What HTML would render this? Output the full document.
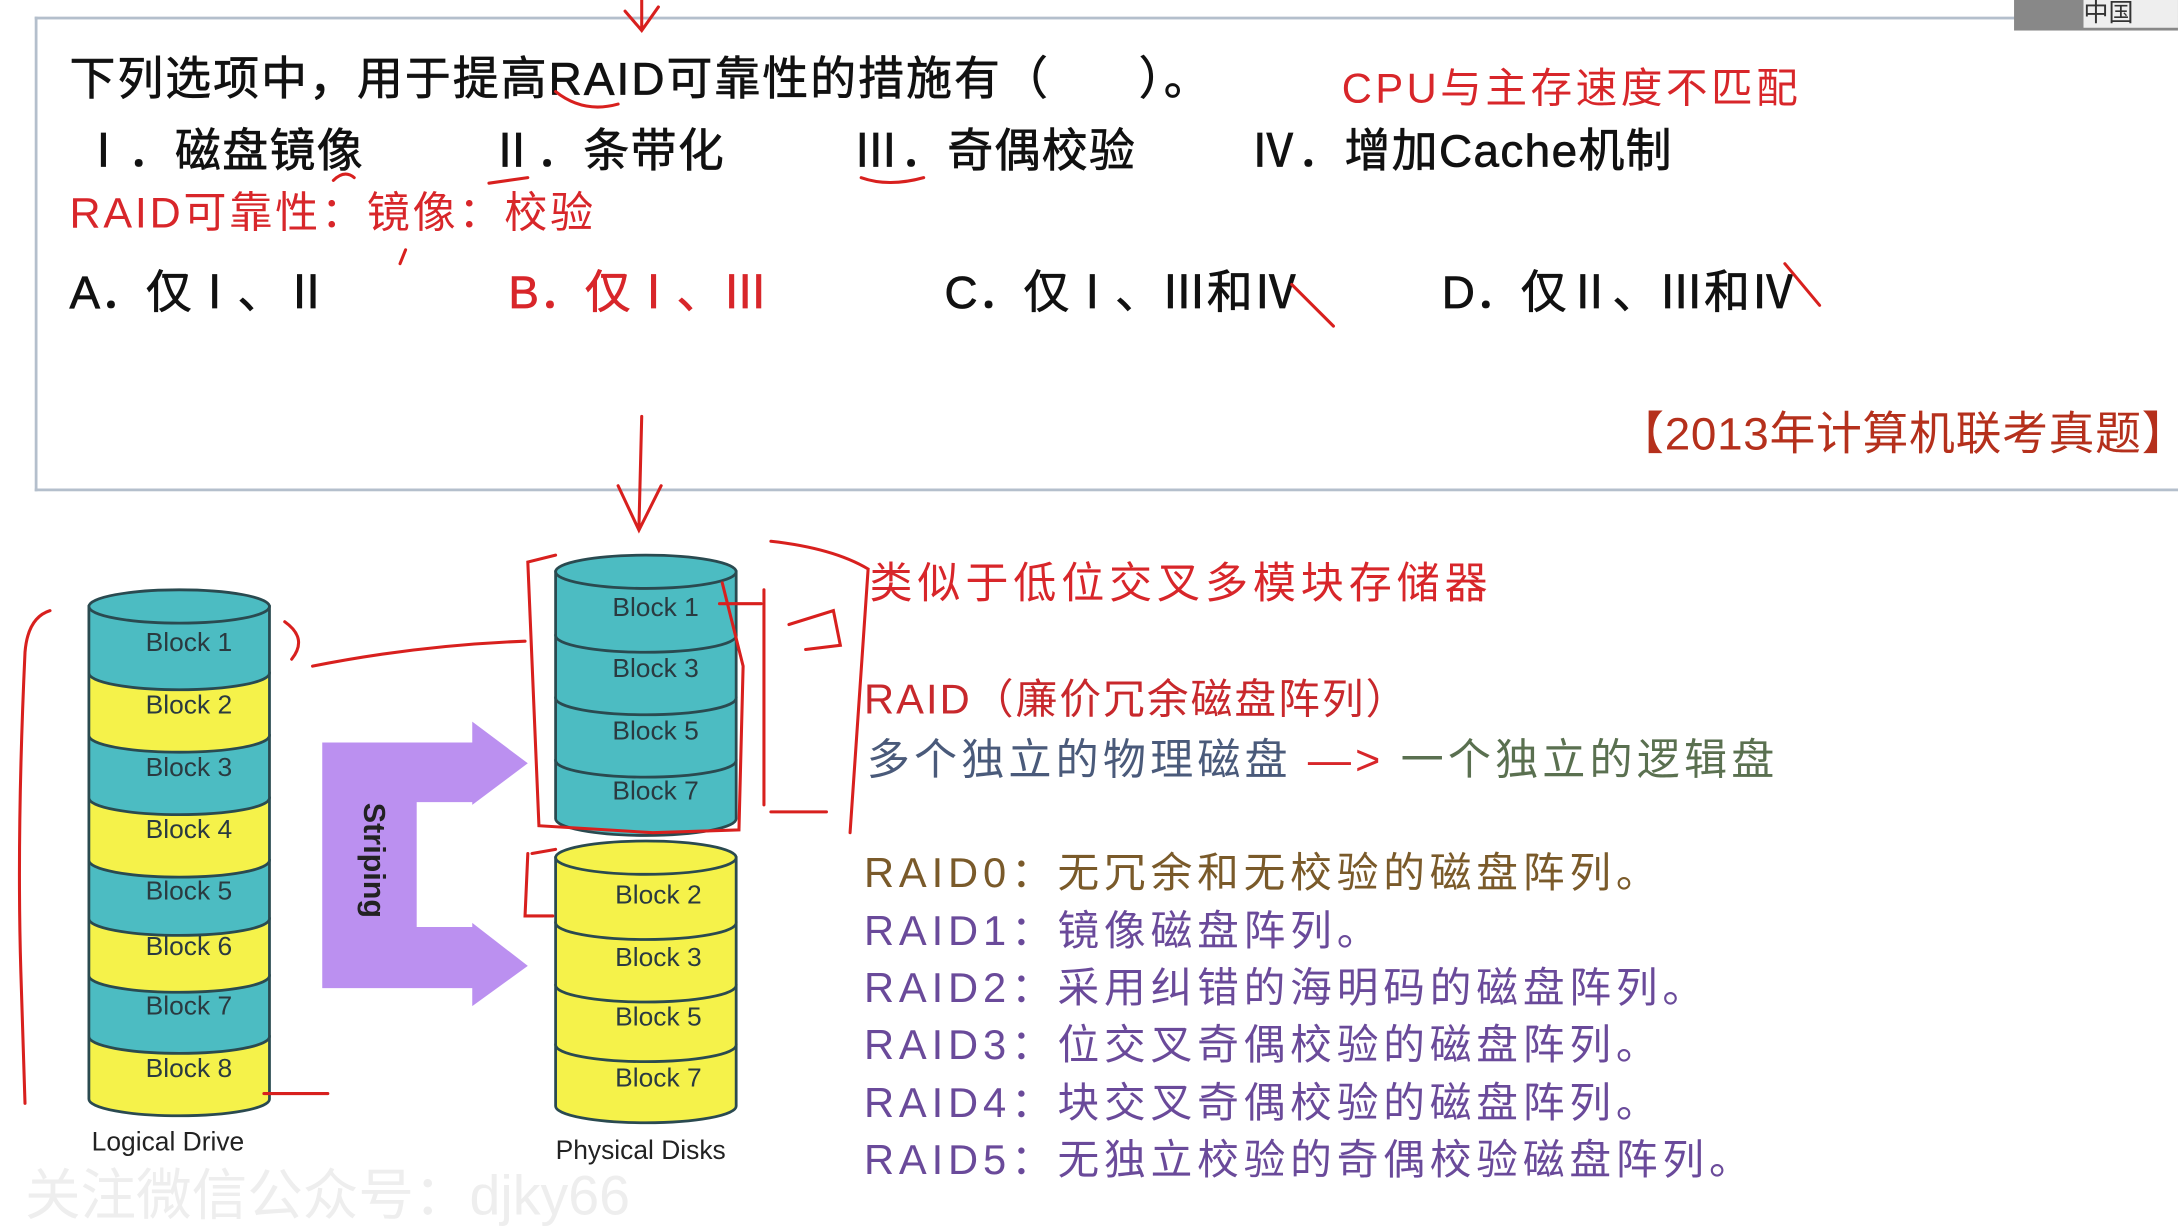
<!DOCTYPE html>
<html><head><meta charset="utf-8"><style>
html,body{margin:0;padding:0;background:#fff;overflow:hidden}
#w{position:absolute;left:0;top:0;width:1568px;height:882px;transform:scale(1.389,1.3878);transform-origin:0 0;font-family:"Liberation Sans","Noto Sans CJK SC",sans-serif}
.t{position:absolute;white-space:nowrap;line-height:1}
.k{color:#111;font-size:33px;-webkit-text-stroke:0.5px #111}
.r{color:#d8262a}
.rm{font-family:"Noto Sans CJK SC",sans-serif}
svg{position:absolute;left:0;top:0}
</style></head><body><div id="w">
<div style="position:absolute;left:25px;top:12px;width:1560px;height:338px;border:2px solid #b4bfcc;border-right:none"></div>
<div style="position:absolute;left:1450px;top:0;width:118px;height:22px;background:#888"></div>
<div style="position:absolute;left:1500px;top:0;width:68px;height:20px;background:#eee;color:#333;font-size:18px;line-height:18px" class="t">中国</div>

<div class="t k" style="left:50px;top:40px;letter-spacing:1.5px">下列选项中，用于提高RAID可靠性的措施有（&nbsp;&nbsp;&nbsp;&nbsp;&nbsp;&nbsp;）。</div>
<div class="t k" style="left:58px;top:90px;letter-spacing:1px"><span class="rm">Ⅰ</span>．磁盘镜像</div>
<div class="t k" style="left:352px;top:90px;letter-spacing:1px"><span class="rm">Ⅱ</span>．条带化</div>
<div class="t k" style="left:614px;top:90px;letter-spacing:1px"><span class="rm">Ⅲ</span>．奇偶校验</div>
<div class="t k" style="left:900px;top:90px;letter-spacing:1px"><span class="rm">Ⅳ</span>．增加Cache机制</div>
<div class="t r" style="left:966px;top:50px;font-size:30px;letter-spacing:2.5px">CPU与主存速度不匹配</div>
<div class="t r" style="left:50px;top:138px;font-size:31px;letter-spacing:2px">RAID可靠性：镜像：校验</div>
<div class="t k" style="left:50px;top:192px">A．仅<span class="rm">Ⅰ、Ⅱ</span></div>
<div class="t k r" style="left:366px;top:192px;color:#d8262a;-webkit-text-stroke:0.5px #d8262a">B．仅<span class="rm">Ⅰ、Ⅲ</span></div>
<div class="t k" style="left:680px;top:192px">C．仅<span class="rm">Ⅰ、Ⅲ</span>和<span class="rm">Ⅳ</span></div>
<div class="t k" style="left:1038px;top:192px">D．仅<span class="rm">Ⅱ、Ⅲ</span>和<span class="rm">Ⅳ</span></div>
<div class="t" style="left:1165px;top:296px;font-size:33px;color:#b5301c;letter-spacing:0.5px">【2013年计算机联考真题】</div>

<div class="t r" style="left:626px;top:405px;font-size:31px;letter-spacing:3.5px">类似于低位交叉多模块存储器</div>
<div class="t" style="left:622px;top:490px;font-size:30px;color:#c8282c;letter-spacing:1.5px">RAID（廉价冗余磁盘阵列）</div>
<div class="t" style="left:624px;top:532px;font-size:31px;color:#4a5a7a;letter-spacing:3px">多个独立的物理磁盘 <span style="color:#d8262a">—&gt;</span> <span style="color:#5a7050">一个独立的逻辑盘</span></div>
<div class="t" style="left:622px;top:615px;font-size:30px;color:#7a5a2a;letter-spacing:3.5px">RAID0：无冗余和无校验的磁盘阵列。</div>
<div class="t" style="left:622px;top:657px;font-size:30px;color:#6a4a9a;letter-spacing:3.5px">RAID1：镜像磁盘阵列。</div>
<div class="t" style="left:622px;top:698px;font-size:30px;color:#6a4a9a;letter-spacing:3.5px">RAID2：采用纠错的海明码的磁盘阵列。</div>
<div class="t" style="left:622px;top:739px;font-size:30px;color:#6a4a9a;letter-spacing:3.5px">RAID3：位交叉奇偶校验的磁盘阵列。</div>
<div class="t" style="left:622px;top:781px;font-size:30px;color:#6a4a9a;letter-spacing:3.5px">RAID4：块交叉奇偶校验的磁盘阵列。</div>
<div class="t" style="left:622px;top:822px;font-size:30px;color:#6a4a9a;letter-spacing:3.5px">RAID5：无独立校验的奇偶校验磁盘阵列。</div>
<div class="t" style="left:66px;top:814px;font-size:19px;color:#222">Logical Drive</div>
<div class="t" style="left:400px;top:820px;font-size:19px;color:#222">Physical Disks</div>
<div class="t" style="left:18px;top:842px;font-size:40px;color:#eee">关注微信公众号：djky66</div>

<svg width="1568" height="882" viewBox="0 0 1568 882">
<g stroke="#2a4a50" stroke-width="2">
<path d="M64,747 L64,792 A65,12 0 0 0 194,792 L194,747Z" fill="#f5f24a"/>
<path d="M64,703 L64,747 A65,12 0 0 0 194,747 L194,703Z" fill="#4cbcc2"/>
<path d="M64,662 L64,703 A65,12 0 0 0 194,703 L194,662Z" fill="#f5f24a"/>
<path d="M64,620 L64,662 A65,12 0 0 0 194,662 L194,620Z" fill="#4cbcc2"/>
<path d="M64,575 L64,620 A65,12 0 0 0 194,620 L194,575Z" fill="#f5f24a"/>
<path d="M64,530 L64,575 A65,12 0 0 0 194,575 L194,530Z" fill="#4cbcc2"/>
<path d="M64,485 L64,530 A65,12 0 0 0 194,530 L194,485Z" fill="#f5f24a"/>
<path d="M64,437 L64,485 A65,12 0 0 0 194,485 L194,437Z" fill="#4cbcc2"/>
<ellipse cx="129" cy="437" rx="65" ry="12" fill="#4cbcc2"/>
<path d="M400,548 L400,590 A65,12 0 0 0 530,590 L530,548Z" fill="#4cbcc2"/>
<path d="M400,503 L400,548 A65,12 0 0 0 530,548 L530,503Z" fill="#4cbcc2"/>
<path d="M400,458 L400,503 A65,12 0 0 0 530,503 L530,458Z" fill="#4cbcc2"/>
<path d="M400,412 L400,458 A65,12 0 0 0 530,458 L530,412Z" fill="#4cbcc2"/>
<ellipse cx="465" cy="412" rx="65" ry="12" fill="#4cbcc2"/>
<path d="M400,753 L400,797 A65,12 0 0 0 530,797 L530,753Z" fill="#f5f24a"/>
<path d="M400,710 L400,753 A65,12 0 0 0 530,753 L530,710Z" fill="#f5f24a"/>
<path d="M400,665 L400,710 A65,12 0 0 0 530,710 L530,665Z" fill="#f5f24a"/>
<path d="M400,618 L400,665 A65,12 0 0 0 530,665 L530,618Z" fill="#f5f24a"/>
<ellipse cx="465" cy="618" rx="65" ry="12" fill="#f5f24a"/>
</g>
<g font-family="Liberation Sans, sans-serif" font-size="19" fill="#2a3a40" text-anchor="middle">
<text x="136" y="469">Block 1</text><text x="136" y="514">Block 2</text><text x="136" y="559">Block 3</text><text x="136" y="604">Block 4</text>
<text x="136" y="648">Block 5</text><text x="136" y="688">Block 6</text><text x="136" y="731">Block 7</text><text x="136" y="776">Block 8</text>
<text x="472" y="444">Block 1</text><text x="472" y="488">Block 3</text><text x="472" y="533">Block 5</text><text x="472" y="576">Block 7</text>
<text x="474" y="651">Block 2</text><text x="474" y="696">Block 3</text><text x="474" y="739">Block 5</text><text x="474" y="783">Block 7</text>
</g>
<path d="M232,535 L340,535 L340,520 L380,550 L340,580 L340,578 L300,578 L300,668 L340,668 L340,665 L380,696 L340,725 L340,712 L232,712Z" fill="#bb90f0"/>
<text x="262" y="620" transform="rotate(90 262 620)" font-family="Liberation Sans, sans-serif" font-weight="bold" font-size="22" fill="#222" text-anchor="middle">Striping</text>
<g fill="none" stroke="#d8201e" stroke-width="2.2" stroke-linecap="round">
<path d="M462,0 L462,20 M450,8 L462,22 L474,5"/>
<path d="M462,300 L460,380 M445,350 L460,382 L476,350"/>
<path d="M36,440 Q20,445 18,470 Q12,600 15,700 L18,795"/>
<path d="M205,448 Q222,460 210,475"/>
<path d="M225,480 Q300,465 378,462"/>
<path d="M190,788 L236,788"/>
<path d="M400,400 L380,405 L388,595 L470,600 L532,598 L535,480 L520,420"/>
<path d="M555,390 Q600,395 625,410 L612,600"/>
<path d="M550,425 L550,580 M555,585 L595,585"/>
<path d="M380,615 L378,660 L398,660 M383,615 L400,612"/>
<path d="M568,450 L600,440 L605,465 L580,468"/>
<path d="M518,435 L548,435"/>
<path d="M240,130 Q248,122 255,128 M352,132 L380,128 M620,128 Q640,135 665,128"/>
<path d="M288,190 L292,180"/>
<path d="M930,205 L960,235 M1285,190 L1310,220"/>
<path d="M400,66 Q420,82 445,75"/>
</g>
</svg>
</div></body></html>
